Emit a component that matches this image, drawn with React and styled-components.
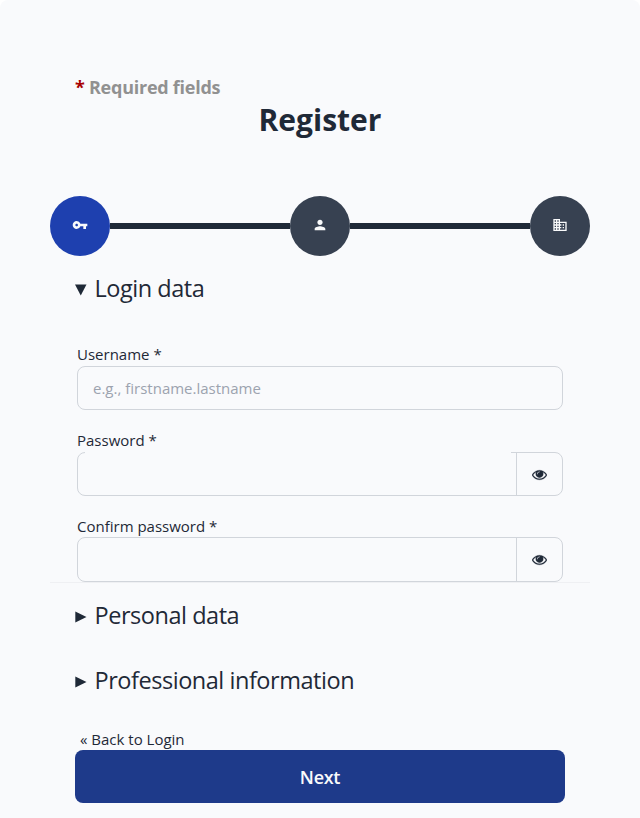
import React from "react";
import styled, { createGlobalStyle } from "styled-components";
import { MdVpnKey, MdPerson, MdDomain } from "react-icons/md";

const GlobalStyle = createGlobalStyle`
  *, *::before, *::after { box-sizing: border-box; }
  body {
    margin: 0;
    background: #ffffff;
    color: #1f2937;
    font-family: "Open Sans", "Noto Sans", sans-serif;
  }
`;

const Card = styled.main`
  height: 818px;
  overflow: hidden;
  padding: 74px 50px 0;
  background: #f9fafc;
  border-radius: 8px 8px 0 0;
`;

const Required = styled.p`
  margin: 0 25px;
  height: 26px;
  font-size: 18px;
  line-height: 26px;
  font-weight: 700;
  letter-spacing: -0.25px;
  color: #919191;
`;

const Star = styled.span`
  color: #a80000;
`;

const Title = styled.h1`
  margin: 0;
  height: 40px;
  font-size: 30px;
  line-height: 40px;
  font-weight: 700;
  text-align: center;
`;

const Stepper = styled.nav`
  display: flex;
  align-items: center;
  margin-top: 56px;
`;

const Step = styled.span`
  display: flex;
  flex: none;
  align-items: center;
  justify-content: center;
  width: 60px;
  height: 60px;
  padding-bottom: 2px;
  border-radius: 50%;
  background: ${(p) => (p.$active ? "#1e40af" : "#374151")};
  color: #f9fafb;
  font-size: 16px;
`;

const Track = styled.span`
  flex: 1;
  height: 6px;
  background: #1f2937;
`;

const Heading = styled.h2`
  display: flex;
  align-items: center;
  gap: 7.5px;
  margin: 0 25px;
  height: 65px;
  padding-bottom: 2px;
  font-size: 23.5px;
  line-height: 32px;
  letter-spacing: -0.46px;
  font-weight: 400;
`;

const Marker = styled.svg`
  flex: none;
  width: 12px;
  height: 12px;
  margin-top: 4px;
  fill: currentColor;
`;

const Fields = styled.div`
  height: 262px;
  padding: 22px 27px 0;
  border-bottom: 1px solid #eff0f3;
`;

const Field = styled.div`
  height: ${(p) => p.$height || 86}px;
`;

const Label = styled.label`
  display: block;
  height: ${(p) => p.$height || 23}px;
  font-size: 15px;
  line-height: 22px;
`;

const InputBox = styled.div`
  display: flex;
  height: ${(p) => p.$height || 44}px;
  border: 1px solid #d1d5db;
  border-radius: 8px;
  position: relative;
`;

const Input = styled.input`
  flex: 1;
  min-width: 0;
  padding: 0 15px;
  border: 0;
  outline: 0;
  background: transparent;
  color: inherit;
  font: 15px "Open Sans", sans-serif;
  &::placeholder { color: #9ca3af; opacity: 1; }
`;

const LabelGap = styled.span`
  position: absolute;
  top: -1px;
  left: 7px;
  right: 51px;
  height: 1px;
  background: #f9fafc;
`;

const Reveal = styled.button`
  display: flex;
  align-items: center;
  justify-content: center;
  width: 46px;
  padding: 0;
  border: 0;
  border-left: 1px solid #d1d5db;
  background: transparent;
  color: #1f2937;
`;

const Back = styled.a`
  display: block;
  margin-left: 30px;
  height: 22px;
  font-size: 15px;
  line-height: 22px;
`;

const Next = styled.button`
  display: block;
  width: 490px;
  height: 53px;
  margin: 0 auto;
  border: 0;
  border-radius: 8px;
  background: #1e3a8a;
  color: #f9fafb;
  font: 600 18px "Open Sans", sans-serif;
  letter-spacing: -0.3px;
`;

const Sections = styled.div`
  height: 145px;
`;

const Triangle = ({ open }) => (
  <Marker viewBox="0 0 12 12" aria-hidden="true">
    <path d={open ? "M0 0.5H11.5L5.75 11.5Z" : "M0.3 0.5V11.5L11.5 6Z"} />
  </Marker>
);

const Eye = () => (
  <svg width="15" height="15" viewBox="0 0 1792 1792" fill="currentColor" stroke="currentColor" strokeWidth="30" aria-hidden="true">
    <path d="M1664 960q-152-236-381-353 61 104 61 225 0 185-131.5 316.5t-316.5 131.5-316.5-131.5-131.5-316.5q0-121 61-225-229 117-381 353 133 205 333.5 326.5t434.5 121.5 434.5-121.5 333.5-326.5zm-720-384q0-20-14-34t-34-14q-125 0-214.5 89.5t-89.5 214.5q0 20 14 34t34 14 34-14 14-34q0-86 61-147t147-61q20 0 34-14t14-34zm848 384q0 34-20 69-140 230-376.5 368.5t-499.5 138.5-499.5-139-376.5-368q-20-35-20-69t20-69q140-229 376.5-368t499.5-139 499.5 139 376.5 368q20 35 20 69z" />
  </svg>
);

export default function App() {
  return (
    <>
      <GlobalStyle />
      <Card>
        <Required><Star>*</Star> Required fields</Required>
        <Title>Register</Title>
        <Stepper>
          <Step $active><MdVpnKey /></Step>
          <Track />
          <Step><MdPerson /></Step>
          <Track />
          <Step><MdDomain /></Step>
        </Stepper>
        <Heading><Triangle open />Login data</Heading>
        <Fields>
          <Field>
            <Label htmlFor="username">Username *</Label>
            <InputBox><Input id="username" placeholder="e.g., firstname.lastname" /></InputBox>
          </Field>
          <Field>
            <Label htmlFor="password">Password *</Label>
            <InputBox>
              <LabelGap />
              <Input id="password" type="password" />
              <Reveal type="button" aria-label="Show password"><Eye /></Reveal>
            </InputBox>
          </Field>
          <Field $height={67}>
            <Label $height={22} htmlFor="confirm">Confirm password *</Label>
            <InputBox $height={45}>
              <Input id="confirm" type="password" />
              <Reveal type="button" aria-label="Show password"><Eye /></Reveal>
            </InputBox>
          </Field>
        </Fields>
        <Sections>
          <Heading><Triangle />Personal data</Heading>
          <Heading><Triangle />Professional information</Heading>
        </Sections>
        <Back>« Back to Login</Back>
        <Next type="button">Next</Next>
      </Card>
    </>
  );
}
